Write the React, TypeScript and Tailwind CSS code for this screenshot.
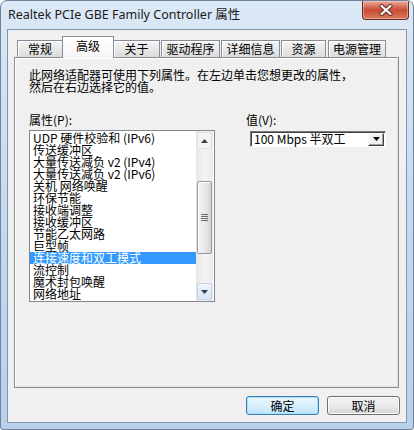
import React from "react";

const tabs: { label: string; cls: string; sel?: boolean }[] = [
  { label: "常规", cls: "w-[46px] ml-[3px]" },
  { label: "高级", cls: "w-[52px] -ml-[1px]", sel: true },
  { label: "关于", cls: "w-[47px] -ml-[1px]" },
  { label: "驱动程序", cls: "w-[59px] ml-[1px]" },
  { label: "详细信息", cls: "w-[59px] ml-[1px]" },
  { label: "资源", cls: "w-[45px] ml-[1px]" },
  { label: "电源管理", cls: "w-[58px] ml-[2px]" },
];

const items = [
  "UDP 硬件校验和 (IPv6)",
  "传送缓冲区",
  "大量传送减负 v2 (IPv4)",
  "大量传送减负 v2 (IPv6)",
  "关机 网络唤醒",
  "环保节能",
  "接收端调整",
  "接收缓冲区",
  "节能乙太网路",
  "巨型帧",
  "连接速度和双工模式",
  "流控制",
  "魔术封包唤醒",
  "网络地址",
];

function UpArrow() {
  return (
    <svg width="7" height="4" viewBox="0 0 7 4">
      <path d="M3.5 0 L7 4 L0 4 Z" fill="#3f3f3f" />
    </svg>
  );
}
function DownArrow({ color = "#3f3f3f" }: { color?: string }) {
  return (
    <svg width="7" height="4" viewBox="0 0 7 4">
      <path d="M0 0 L7 0 L3.5 4 Z" fill={color} />
    </svg>
  );
}

export default function App() {
  return (
    <div className="w-[414px] h-[430px] flex flex-col rounded-t-[7px] rounded-b-[3px] border border-[#6f8299] bg-gradient-to-b from-[#dbe8f6] via-[#c5d9f0] to-[#b9d0ec] font-['Noto_Sans_CJK_SC',sans-serif] text-[12px] text-black overflow-hidden">
      {/* title bar */}
      <div className="h-[28px] flex items-start justify-between">
        <div className="pl-[7px] pt-[5px] leading-[17px] text-[12.5px] text-[#1a1a1a] font-['Noto_Sans','Noto_Sans_CJK_SC',sans-serif]">
          Realtek PCIe GBE Family Controller 属性
        </div>
        <div className="mr-[4px] w-[47px] h-[19px] rounded-b-[4px] border border-t-0 border-[#6b2a1f] bg-gradient-to-b from-[#e9a99c] via-[#c94a33] to-[#d8795c] shadow-[inset_0_0_0_1px_rgba(255,255,255,0.35)] flex items-center justify-center">
          <svg width="14" height="12" viewBox="0 0 14 12">
            <path d="M2.5 2 L11.5 10 M11.5 2 L2.5 10" stroke="#5a2a22" strokeWidth="4" strokeLinecap="round" />
            <path d="M2.5 2 L11.5 10 M11.5 2 L2.5 10" stroke="#ffffff" strokeWidth="2.2" strokeLinecap="round" />
          </svg>
        </div>
      </div>

      {/* client */}
      <div className="flex-1 mx-[6px] mb-[6px] border border-[#8497ae] bg-[#f0f0f0] flex flex-col">
        <div className="mx-[6px] mt-[6px] flex flex-col">
          {/* tabs */}
          <div className="h-[21px] flex items-end">
            {tabs.map((t) =>
              t.sel ? (
                <div
                  key={t.label}
                  className={`${t.cls} relative z-10 h-[22px] -mb-[1px] border border-b-0 border-[#898c95] bg-gradient-to-b from-[#ffffff] to-[#f6f6f6] flex justify-center pt-[1px] leading-[16px]`}
                >
                  {t.label}
                </div>
              ) : (
                <div
                  key={t.label}
                  className={`${t.cls} h-[17px] border border-b-0 border-[#898c95] bg-gradient-to-b from-[#f5f5f5] to-[#dbdbdb] shadow-[inset_1px_1px_0_#ffffff] flex justify-center leading-[16px]`}
                >
                  {t.label}
                </div>
              )
            )}
          </div>
          {/* panel */}
          <div className="h-[331px] w-[385px] border border-[#898c95] bg-[#f0f0f0] shadow-[inset_1px_1px_0_#ffffff,inset_-1px_-1px_0_#e3e3e3] pl-[14px] pt-[11px] flex flex-col">
            <div className="leading-[12px]">
              <div className="whitespace-nowrap">此网络适配器可使用下列属性。在左边单击您想更改的属性，</div>
              <div className="whitespace-nowrap">然后在右边选择它的值。</div>
            </div>
            <div className="mt-[21px] flex">
              {/* left column */}
              <div className="w-[186px] flex flex-col">
                <div className="leading-[12px] h-[12px]">属性(P):</div>
                <div className="mt-[4px] h-[172px] border border-[#828790] bg-white flex">
                  <div className="w-[166px] pt-[1px] flex flex-col">
                    {items.map((it, i) =>
                      i === 10 ? (
                        <div key={it} className="h-[12px] leading-[12px] pl-[3px] bg-[#3399ff] text-white whitespace-nowrap">
                          {it}
                        </div>
                      ) : (
                        <div key={it} className="h-[12px] leading-[12px] pl-[3px] whitespace-nowrap">
                          {it}
                        </div>
                      )
                    )}
                  </div>
                  {/* scrollbar */}
                  <div className="w-[17px] flex flex-col bg-gradient-to-r from-[#e6e6e6] via-[#f4f4f4] to-[#ebebeb]">
                    <div className="h-[17px] mx-[1px] mt-[1px] rounded-[2px] border border-[#e1e1e1] bg-[#f3f3f3] flex items-center justify-center">
                      <UpArrow />
                    </div>
                    <div className="flex-1 flex flex-col">
                      <div className="mt-[32px] h-[73px] mx-[1px] rounded-[2px] border border-[#979797] bg-gradient-to-r from-[#f5f5f5] via-[#e9e9e9] to-[#d6d6d6] shadow-[inset_1px_1px_0_#ffffff] flex flex-col items-center justify-center gap-[1px]">
                        <div className="w-[7px] h-[1px] bg-[#6f6f6f]" />
                        <div className="w-[7px] h-[1px] bg-[#6f6f6f]" />
                        <div className="w-[7px] h-[1px] bg-[#6f6f6f]" />
                        <div className="w-[7px] h-[1px] bg-[#6f6f6f]" />
                      </div>
                    </div>
                    <div className="h-[17px] mx-[1px] mb-[1px] rounded-[2px] border border-[#c3d3e5] bg-gradient-to-b from-[#eef4fb] to-[#d9e6f4] flex items-center justify-center">
                      <DownArrow color="#2f3f56" />
                    </div>
                  </div>
                </div>
              </div>
              {/* right column */}
              <div className="ml-[31px] flex flex-col">
                <div className="leading-[12px] h-[12px]">值(V):</div>
                <div className="ml-[4px] mt-[5px] w-[136px] h-[16px] border border-t-[#7a7a7a] border-l-[#7a7a7a] border-b-[#ffffff] border-r-[#ffffff] bg-white shadow-[inset_1px_1px_0_#404040] flex items-center">
                  <div className="flex-1 pl-[3px] leading-[12px] whitespace-nowrap">100 Mbps 半双工</div>
                  <div className="mr-[1px] w-[16px] h-[13px] bg-[#f0f0f0] border border-t-[#ffffff] border-l-[#ffffff] border-b-[#404040] border-r-[#404040] shadow-[inset_-1px_-1px_0_#a0a0a0] flex items-center justify-center">
                    <DownArrow color="#000000" />
                  </div>
                </div>
              </div>
            </div>
          </div>
        </div>
        {/* buttons */}
        <div className="mt-[8px] mr-[6px] flex justify-end gap-[8px]">
          <button className="w-[73px] h-[19px] rounded-[3px] border border-[#3c7fb1] bg-gradient-to-b from-[#eaf6fd] via-[#d9f0fc] to-[#bee6fd] shadow-[inset_0_0_0_1px_#a6e1f9] flex items-center justify-center leading-[12px] text-[12px]">
            确定
          </button>
          <button className="w-[73px] h-[19px] rounded-[3px] border border-[#707070] bg-gradient-to-b from-[#f2f2f2] via-[#ebebeb] to-[#d4d4d4] shadow-[inset_0_0_0_1px_#fcfcfc] flex items-center justify-center leading-[12px] text-[12px]">
            取消
          </button>
        </div>
      </div>
    </div>
  );
}
